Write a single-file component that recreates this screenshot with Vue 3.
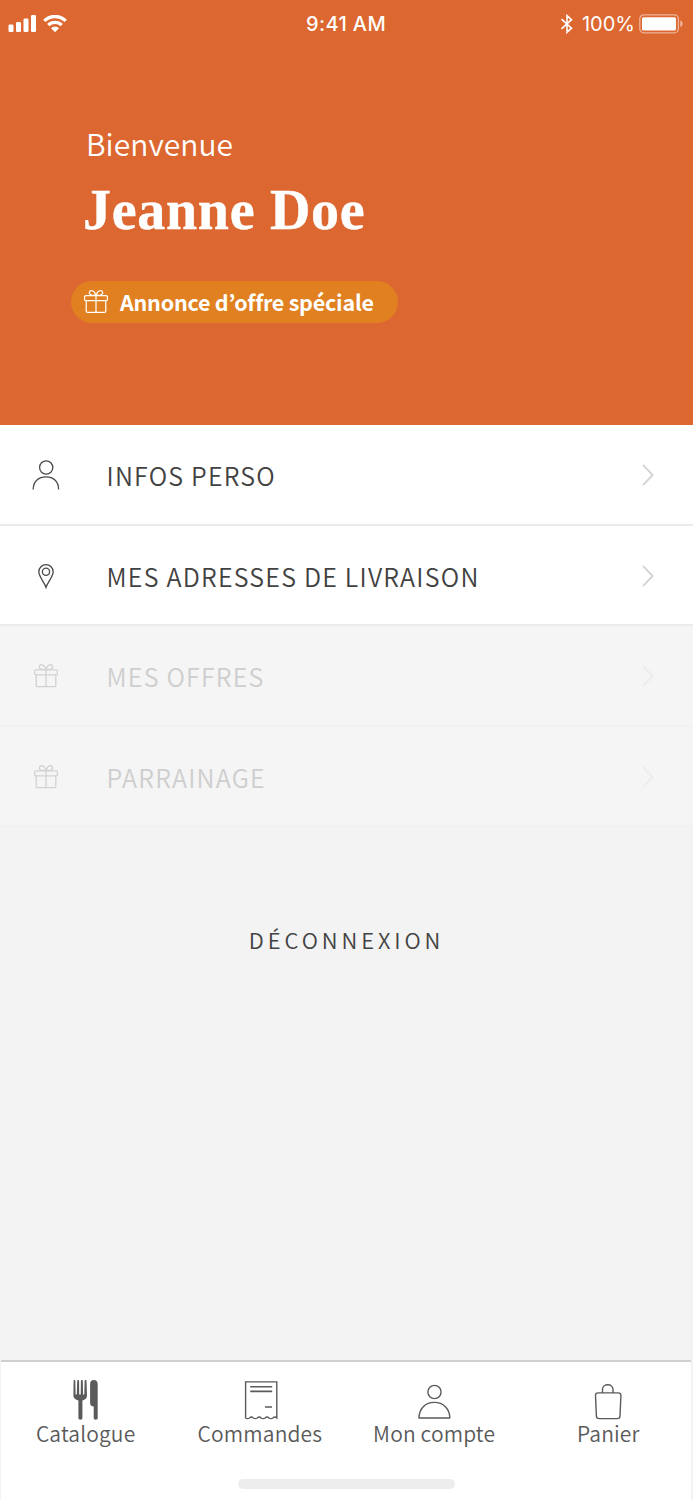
<script setup>
const rows = [
  { label: 'INFOS PERSO', icon: 'user' },
  { label: 'MES ADRESSES DE LIVRAISON', icon: 'pin' },
  { label: 'MES OFFRES', icon: 'gift', disabled: true },
  { label: 'PARRAINAGE', icon: 'gift', disabled: true },
]
const tabs = [
  { label: 'Catalogue', icon: 'cutlery' },
  { label: 'Commandes', icon: 'receipt' },
  { label: 'Mon compte', icon: 'account' },
  { label: 'Panier', icon: 'bag' },
]
</script>

<template>
  <div class="screen">
    <header class="hero">
      <div class="status">
        <div class="status-left">
          <svg width="29" height="18" viewBox="0 0 29 18" fill="#fff">
            <rect x="0.5" y="9.6" width="5" height="7.4" rx="1.2" />
            <rect x="8" y="7" width="5" height="10" rx="1.2" />
            <rect x="15.5" y="3.6" width="5" height="13.4" rx="1.2" />
            <rect x="23" y="0" width="5" height="17" rx="1.2" />
          </svg>
          <svg class="wifi" width="24" height="18" viewBox="0 0 24 18" fill="none" stroke="#fff" stroke-width="3.3">
            <path d="M1.3 5.9a15.2 15.2 0 0 1 21.4 0" />
            <path d="M5.3 10.1a9.5 9.5 0 0 1 13.4 0" />
            <path d="M8 13.2a5.7 5.7 0 0 1 8 0l-4 4z" fill="#fff" stroke="none" />
          </svg>
        </div>
        <div class="time">9:41 AM</div>
        <div class="status-right">
          <svg class="bluetooth" width="14" height="20" viewBox="0 0 14 20" fill="none" stroke="#fff" stroke-width="1.6">
            <path d="M1.5 5.2 11.5 14.2 7 18.3V1.6l4.5 4.1L1.5 14.8" />
          </svg>
          <span class="percent">100%</span>
          <svg width="45" height="20" viewBox="0 0 45 20">
            <rect x="0.8" y="0.8" width="38.6" height="18" rx="4" fill="none" stroke="#fff" stroke-opacity=".5" stroke-width="1.3" />
            <rect x="3" y="3.2" width="34" height="13.2" rx="1.5" fill="#fff" />
            <path d="M41.3 6.5c3 1.2 3 5.4 0 6.6z" fill="#fff" fill-opacity=".55" />
          </svg>
        </div>
      </div>
      <div class="welcome">Bienvenue</div>
      <h1 class="name">Jeanne Doe</h1>
      <div class="badge">
        <svg class="badge-gift" width="26" height="26" viewBox="0 0 26 26" fill="none" stroke="#fff" stroke-width="1.2">
          <rect x="1.6" y="6.6" width="22.8" height="5" rx="1.2" />
          <path d="M3.2 11.6v10.6q0 1.2 1.2 1.2h17.2q1.2 0 1.2-1.2V11.6M13 6.6v16.8M12.6 6.2C8 6.8 5.6 5.2 6.4 3c.8-2.2 5.4-2.2 6.2 3.2M13.4 6.2c4.6.6 7-1 6.2-3.2-.8-2.2-5.4-2.2-6.2 3.2" />
        </svg>
        <span class="badge-text">Annonce d’offre spéciale</span>
      </div>
    </header>

    <main class="menu">
      <div v-for="row in rows" :key="row.label" class="row" :class="{ disabled: row.disabled }">
        <div class="row-icon">
          <svg v-if="row.icon === 'user'" width="28" height="30" viewBox="0 0 28 30" fill="none" stroke="#4a4a4a" stroke-width="1.3">
            <circle cx="14.2" cy="7.5" r="6.6" />
            <path d="M1.2 29.5C1.2 21 7 16.9 14 16.9s12.6 4.1 12.6 12.6" />
          </svg>
          <svg v-else-if="row.icon === 'pin'" width="18" height="26" viewBox="0 0 18 26" fill="none" stroke="#4a4a4a" stroke-width="1.3">
            <path d="M9 24.4C7.8 20 1.8 13.6 1.8 8.8a7.2 7.2 0 0 1 14.4 0C16.2 13.6 10.2 20 9 24.4z" />
            <circle cx="9" cy="8.8" r="3.6" />
          </svg>
          <svg v-else width="26" height="26" viewBox="0 0 26 26" fill="none" stroke="#d2d2d2" stroke-width="1.3">
            <rect x="1.6" y="6.8" width="22.8" height="5" rx="1.2" />
            <path d="M3.2 11.8v10.6q0 1.2 1.2 1.2h17.2q1.2 0 1.2-1.2V11.8M13 6.8v16.8M12.6 6.4C8 7 5.6 5.4 6.4 3.2c.8-2.2 5.4-2.2 6.2 3.2M13.4 6.4c4.6.6 7-1 6.2-3.2-.8-2.2-5.4-2.2-6.2 3.2" />
          </svg>
        </div>
        <span class="row-label">{{ row.label }}</span>
        <svg class="chevron" width="12" height="22" viewBox="0 0 12 22" fill="none" stroke-width="1.9">
          <path d="M1 .8 10.6 11 1 21.2" />
        </svg>
      </div>
    </main>

    <div class="logout">DÉCONNEXION</div>

    <nav class="tabbar">
      <div class="tabs">
        <div v-for="tab in tabs" :key="tab.label" class="tab">
          <svg v-if="tab.icon === 'cutlery'" class="cutlery" width="25" height="40" viewBox="0 0 25 40" fill="#5a5a5a">
            <path d="M1.3 0c.9 0 1 .5 1 1l.3 13.5h1.2L4.2 1c0-1.300 1.900-1.300 1.900 0l.1 13.500h1.500L7.900 1c0-1.300 1.900-1.300 1.900 0l.3 13.500h1.200L11.600 1c0-1.300 1.900-1.300 1.900 0l.5 14.500c0 2.500-1.800 4.200-4.600 5.100V38c0 2.300-4 2.300-4 0V20.600C2.600 19.700.4 18 .4 15.500L.6 1c0-.5.2-1 .7-1z" />
            <path d="M20.800 0c2.300 0 3.900 1.600 3.900 4v34c0 2.300-4 2.300-4 0V26.500c-2.300 0-3.600-1.300-3.600-3.500V4c0-2.400 1.500-4 3.700-4z" />
          </svg>
          <svg v-else-if="tab.icon === 'receipt'" class="receipt" width="34" height="40" viewBox="0 0 34 40" fill="none" stroke="#5a5a5a" stroke-width="1.4">
            <path d="M1.6 38V1.900h31.200V38q-2-1.800-3.900 0-2 1.300-3.900 0-2-1.800-3.900 0-2 1.300-3.900 0-2-1.800-3.900 0-2 1.300-3.900 0-2-1.800-3.900 0-2 1.300-3.900 0z" />
            <path d="M6.200 6.700h22M6.200 11.400h22M21 27h7" stroke-width="1.6" />
          </svg>
          <svg v-else-if="tab.icon === 'account'" width="34" height="40" viewBox="0 0 34 40" fill="none" stroke="#5a5a5a" stroke-width="1.4">
            <circle cx="17.5" cy="12" r="6.6" />
            <path d="M2 38C2 28.5 8.3 22.4 17.3 22.4S32.800 28.500 32.800 38z" stroke-linejoin="round" />
          </svg>
          <svg v-else width="28" height="40" viewBox="0 0 28 40" fill="none" stroke="#5a5a5a" stroke-width="1.4">
            <path d="M4.2 12.9h19.900q2.900 0 2.800 2.800l-.9 20.300q-.1 2.600-2.700 2.600H5.200q-2.700 0-2.800-2.600L1.500 15.700q-.1-2.800 2.700-2.800zM8.500 12.600v-3c0-6.500 10.500-6.500 10.500 0v3" />
          </svg>
          <span class="tab-label">{{ tab.label }}</span>
        </div>
      </div>
      <div class="home-bar"></div>
    </nav>
  </div>
</template>

<style>
body { margin: 0; background: #f3f3f3; }
</style>

<style scoped>
.screen {
  width: 693px;
  height: 1500px;
  overflow: hidden;
  display: flex;
  flex-direction: column;
  background: #f3f3f3;
  color: #424242;
  font-family: "Noto Sans CJK JP", "Open Sans", sans-serif;
  white-space: nowrap;
}
svg { display: block; flex: none; }
.hero {
  height: 425px;
  box-sizing: border-box;
  flex: none;
  background: #dc6730;
  color: #fff;
}
.status {
  height: 46px;
  padding: 0 9px 0 8px;
  display: grid;
  grid-template-columns: 1fr auto 1fr;
  align-items: center;
  font-family: Inter, Roboto, sans-serif;
}
.status-left { display: flex; }
.wifi { margin-left: 6px; }
.time { font-size: 20px; font-weight: 500; letter-spacing: 0.4px; line-height: 46px; padding-top: 1px; }
.status-right { display: flex; align-items: center; justify-content: flex-end; }
.percent { font-size: 20px; line-height: 46px; margin: 1px 4px 0 8px; }
.welcome { margin: 77px 0 0 86px; font-size: 30px; line-height: 40px; font-weight: 350; letter-spacing: 0.05px; }
.name {
  margin: 12px 0 0 83px;
  font-family: "Liberation Serif", serif;
  font-size: 56px;
  line-height: 70px;
  font-weight: 700;
  letter-spacing: 0.7px;
  -webkit-text-stroke: 0.4px #fff;
}
.badge {
  margin: 36px 0 0 71px;
  width: 327px;
  height: 42px;
  box-sizing: border-box;
  padding-left: 12px;
  display: flex;
  align-items: center;
  border-radius: 21px;
  background: #e08020;
}
.badge-text { margin-left: 11px; font-size: 21.5px; line-height: 42px; font-weight: 700; letter-spacing: -0.23px; }
.menu { flex: none; }
.row {
  height: 100px;
  padding-top: 1px;
  box-sizing: border-box;
  display: flex;
  align-items: center;
  border-bottom: 2px solid #ebebeb;
  background: #fff;
}
.row:nth-child(odd) { height: 101px; padding-top: 0; }
.row-icon { width: 92px; display: flex; justify-content: center; }
.row-label { flex: 1; margin-left: 14.5px; font-size: 25px; line-height: 50px; letter-spacing: 1.22px; font-weight: 350; }
.chevron { margin-right: 39px; stroke: #d4d4d4; }
.disabled { background: #f5f5f5; color: #cecece; border-bottom-color: #f2f2f2; }
.disabled .chevron { stroke: #ececec; }
.logout { margin-top: 92px; text-align: center; font-size: 22px; line-height: 40px; letter-spacing: 3.9px; font-weight: 350; }
.tabbar {
  margin: auto 2px 0 1px;
  height: 140px;
  box-sizing: border-box;
  flex: none;
  border-top: 2px solid #d0d0d0;
  background: #fff;
}
.tabs { width: 697px; margin-left: -3px; display: grid; grid-template-columns: repeat(4, 1fr); padding-top: 18px; }
.tab { display: flex; flex-direction: column; align-items: center; }
.cutlery { margin-left: 1px; }
.receipt { margin-left: 3px; }
.tab-label { font-size: 21px; line-height: 27px; color: #5a5a5a; letter-spacing: 0.15px; font-weight: 350; padding-left: 1px; }
.home-bar { width: 217px; height: 10px; border-radius: 5px; margin: 32px 0 0 237px; background: #ededed; }
</style>
